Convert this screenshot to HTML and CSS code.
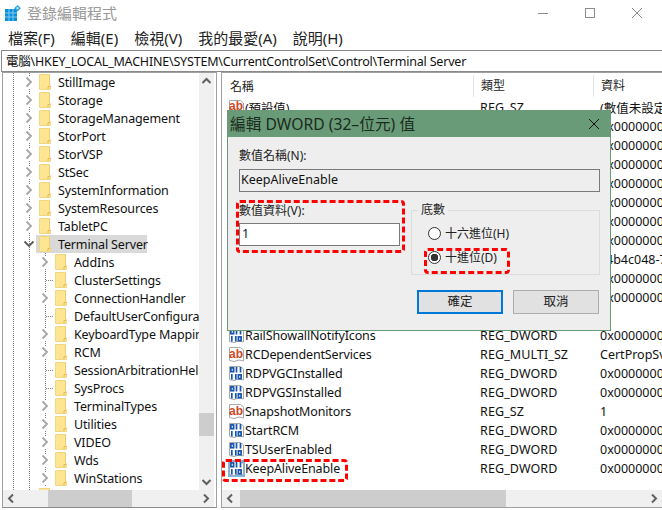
FILE: index.html
```html
<!DOCTYPE html>
<html lang="zh-Hant">
<head>
<meta charset="utf-8">
<title>登錄編輯程式</title>
<link rel="stylesheet" href="styles.css">
</head>
<body>
<svg class="defs" width="0" height="0" aria-hidden="true">
  <symbol id="folder" viewBox="0 0 12 16">
    <path d="M0.5 0.5H10.5V11.5H11.5V15.5H0.5Z" fill="#fee591" stroke="#f3d681"/>
    <path d="M9 15V12.5H11" fill="none" stroke="#e3b84f"/>
    <path d="M10.5 0.5V11" stroke="#edcb73" fill="none"/>
  </symbol>
  <symbol id="chev" viewBox="0 0 8 12">
    <path d="M1.5 1.5L6 6L1.5 10.5" fill="none" stroke="#a6a6a6" stroke-width="1.8"/>
  </symbol>
  <symbol id="page" viewBox="0 0 17 17">
    <path d="M1.5 1.5H12.5L15.5 4V15L11 14L6 15.5L1.5 14.5Z" fill="#fff" stroke="#a8a8a8"/>
  </symbol>
  <symbol id="dword" viewBox="0 0 17 17">
    <path d="M1.5 1.5H12.5L15.5 4V15L11 14L6 15.5L1.5 14.5Z" fill="#fff" stroke="#a8a8a8"/>
    <g fill="none" stroke="#1553ad" stroke-width="1.7">
      <rect x="2.9" y="2.9" width="2.7" height="3.8"/>
      <path d="M8.5 2V7.6M12.5 2V7.6"/>
      <path d="M3.8 9V14.6M7.8 9V14.6"/>
      <rect x="10.4" y="9.9" width="2.7" height="3.8"/>
    </g>
  </symbol>
</svg>

<div class="window">
  <header class="titlebar">
    <svg class="app-icon" width="16" height="16" viewBox="0 0 16 16" aria-hidden="true">
      <rect x="0" y="4" width="12" height="12" fill="#0b8fd9"/>
      <path d="M4 4V16M8 4V16M0 8H12M0 12H12" stroke="#7dcaf2" stroke-width="1"/>
      <path d="M12.5 0L16 3.2L12.5 6.4L9.2 3.2Z" fill="#2aa3e0"/>
      <rect x="11.5" y="2.2" width="2" height="2" fill="#d5effb"/>
    </svg>
    <span class="app-title">登錄編輯程式</span>
    <div class="win-controls">
      <svg width="12" height="12" viewBox="0 0 12 12" aria-hidden="true"><path d="M1 6.5H11" stroke="#8c8c8c"/></svg>
      <svg width="12" height="12" viewBox="0 0 12 12" aria-hidden="true"><rect x="1.5" y="1.5" width="9" height="9" fill="none" stroke="#8c8c8c"/></svg>
      <svg width="12" height="12" viewBox="0 0 12 12" aria-hidden="true"><path d="M1 1L11 11M11 1L1 11" stroke="#8c8c8c"/></svg>
    </div>
  </header>
  <nav class="menubar">
    <span>檔案(F)</span><span>編輯(E)</span><span>檢視(V)</span><span>我的最愛(A)</span><span>說明(H)</span>
  </nav>
  <div class="address">電腦\HKEY_LOCAL_MACHINE\SYSTEM\CurrentControlSet\Control\Terminal Server</div>

  <main class="panes">
    <section class="tree-pane">
      <div class="tree">
        <div class="node lvl1"><svg class="chev"><use href="#chev"/></svg><svg class="fold"><use href="#folder"/></svg><span>StillImage</span></div>
        <div class="node lvl1"><svg class="chev"><use href="#chev"/></svg><svg class="fold"><use href="#folder"/></svg><span>Storage</span></div>
        <div class="node lvl1"><svg class="chev"><use href="#chev"/></svg><svg class="fold"><use href="#folder"/></svg><span>StorageManagement</span></div>
        <div class="node lvl1"><svg class="chev"><use href="#chev"/></svg><svg class="fold"><use href="#folder"/></svg><span>StorPort</span></div>
        <div class="node lvl1"><svg class="chev"><use href="#chev"/></svg><svg class="fold"><use href="#folder"/></svg><span>StorVSP</span></div>
        <div class="node lvl1"><svg class="chev"><use href="#chev"/></svg><svg class="fold"><use href="#folder"/></svg><span>StSec</span></div>
        <div class="node lvl1"><svg class="chev"><use href="#chev"/></svg><svg class="fold"><use href="#folder"/></svg><span>SystemInformation</span></div>
        <div class="node lvl1"><svg class="chev"><use href="#chev"/></svg><svg class="fold"><use href="#folder"/></svg><span>SystemResources</span></div>
        <div class="node lvl1"><svg class="chev"><use href="#chev"/></svg><svg class="fold"><use href="#folder"/></svg><span>TabletPC</span></div>
        <div class="node lvl1 selected"><svg class="chev down" viewBox="0 0 12 8"><path d="M1.5 1.5L6 6L10.5 1.5" fill="none" stroke="#595959" stroke-width="1.8"/></svg><svg class="fold"><use href="#folder"/></svg><span>Terminal Server</span></div>
        <div class="node lvl2"><svg class="chev"><use href="#chev"/></svg><svg class="fold"><use href="#folder"/></svg><span>AddIns</span></div>
        <div class="node lvl2 leaf"><i class="chev-gap"></i><svg class="fold"><use href="#folder"/></svg><span>ClusterSettings</span></div>
        <div class="node lvl2"><svg class="chev"><use href="#chev"/></svg><svg class="fold"><use href="#folder"/></svg><span>ConnectionHandler</span></div>
        <div class="node lvl2 leaf"><i class="chev-gap"></i><svg class="fold"><use href="#folder"/></svg><span>DefaultUserConfiguration</span></div>
        <div class="node lvl2"><svg class="chev"><use href="#chev"/></svg><svg class="fold"><use href="#folder"/></svg><span>KeyboardType Mapping</span></div>
        <div class="node lvl2"><svg class="chev"><use href="#chev"/></svg><svg class="fold"><use href="#folder"/></svg><span>RCM</span></div>
        <div class="node lvl2 leaf"><i class="chev-gap"></i><svg class="fold"><use href="#folder"/></svg><span>SessionArbitrationHelper</span></div>
        <div class="node lvl2 leaf"><i class="chev-gap"></i><svg class="fold"><use href="#folder"/></svg><span>SysProcs</span></div>
        <div class="node lvl2"><svg class="chev"><use href="#chev"/></svg><svg class="fold"><use href="#folder"/></svg><span>TerminalTypes</span></div>
        <div class="node lvl2"><svg class="chev"><use href="#chev"/></svg><svg class="fold"><use href="#folder"/></svg><span>Utilities</span></div>
        <div class="node lvl2"><svg class="chev"><use href="#chev"/></svg><svg class="fold"><use href="#folder"/></svg><span>VIDEO</span></div>
        <div class="node lvl2"><svg class="chev"><use href="#chev"/></svg><svg class="fold"><use href="#folder"/></svg><span>Wds</span></div>
        <div class="node lvl2"><svg class="chev"><use href="#chev"/></svg><svg class="fold"><use href="#folder"/></svg><span>WinStations</span></div>
        <div class="node lvl1"><i class="chev-gap"></i><svg class="fold"><use href="#folder"/></svg></div>
      </div>
      <div class="vscroll">
        <svg class="sb-arrow" viewBox="0 0 15 16"><path d="M3.5 10L7.5 6L11.5 10" fill="none" stroke="#606060" stroke-width="2"/></svg>
        <div class="vtrack"><div class="vthumb"></div></div>
        <svg class="sb-arrow" viewBox="0 0 15 16"><path d="M3.5 6L7.5 10L11.5 6" fill="none" stroke="#606060" stroke-width="2"/></svg>
      </div>
      <div class="hscroll">
        <svg class="sb-arrow" viewBox="0 0 16 16"><path d="M10 3.5L6 7.5L10 11.5" fill="none" stroke="#606060" stroke-width="2"/></svg>
        <div class="htrack tree-track"><div class="hthumb"></div></div>
        <svg class="sb-arrow" viewBox="0 0 16 16"><path d="M6 3.5L10 7.5L6 11.5" fill="none" stroke="#606060" stroke-width="2"/></svg>
      </div>
    </section>

    <section class="list-pane">
      <div class="list-head"><span class="c-name">名稱</span><span class="c-type">類型</span><span class="c-data">資料</span></div>
      <div class="list">
        <div class="row"><span class="c-name"><svg class="val"><use href="#page"/></svg><b class="ab">ab</b>(預設值)</span><span class="c-type">REG_SZ</span><span class="c-data">(數值未設定)</span></div>
        <div class="row"><span class="c-name"><svg class="val"><use href="#dword"/></svg>AllowRemoteRPC</span><span class="c-type">REG_DWORD</span><span class="c-data">0x00000000 (0)</span></div>
        <div class="row"><span class="c-name"><svg class="val"><use href="#dword"/></svg>DelayConMgrTimeout</span><span class="c-type">REG_DWORD</span><span class="c-data">0x00000000 (0)</span></div>
        <div class="row"><span class="c-name"><svg class="val"><use href="#dword"/></svg>DeleteTempDirsOnExit</span><span class="c-type">REG_DWORD</span><span class="c-data">0x00000001 (1)</span></div>
        <div class="row"><span class="c-name"><svg class="val"><use href="#dword"/></svg>fDenyTSConnections</span><span class="c-type">REG_DWORD</span><span class="c-data">0x00000000 (0)</span></div>
        <div class="row"><span class="c-name"><svg class="val"><use href="#dword"/></svg>fSingleSessionPerUser</span><span class="c-type">REG_DWORD</span><span class="c-data">0x00000001 (1)</span></div>
        <div class="row"><span class="c-name"><svg class="val"><use href="#dword"/></svg>GlassSessionId</span><span class="c-type">REG_DWORD</span><span class="c-data">0x00000001 (1)</span></div>
        <div class="row"><span class="c-name"><svg class="val"><use href="#dword"/></svg>InstanceID</span><span class="c-type">REG_DWORD</span><span class="c-data">0x00000000 (0)</span></div>
        <div class="row"><span class="c-name"><svg class="val"><use href="#dword"/></svg>MachineID</span><span class="c-type">REG_SZ</span><span class="c-data">c4b4c048-7f1a</span></div>
        <div class="row"><span class="c-name"><svg class="val"><use href="#dword"/></svg>NotificationTimeOut</span><span class="c-type">REG_DWORD</span><span class="c-data">0x00000000 (0)</span></div>
        <div class="row"><span class="c-name"><svg class="val"><use href="#dword"/></svg>PerSessionTempDir</span><span class="c-type">REG_DWORD</span><span class="c-data">0x00000000 (0)</span></div>
        <div class="row"><span class="c-name"><svg class="val"><use href="#dword"/></svg>ProductVersion</span><span class="c-type">REG_SZ</span><span class="c-data">1</span></div>
        <div class="row"><span class="c-name"><svg class="val"><use href="#dword"/></svg>RailShowallNotifyIcons</span><span class="c-type">REG_DWORD</span><span class="c-data">0x00000001 (1)</span></div>
        <div class="row"><span class="c-name"><svg class="val"><use href="#page"/></svg><b class="ab">ab</b>RCDependentServices</span><span class="c-type">REG_MULTI_SZ</span><span class="c-data">CertPropSvc</span></div>
        <div class="row"><span class="c-name"><svg class="val"><use href="#dword"/></svg>RDPVGCInstalled</span><span class="c-type">REG_DWORD</span><span class="c-data">0x00000001 (1)</span></div>
        <div class="row"><span class="c-name"><svg class="val"><use href="#dword"/></svg>RDPVGSInstalled</span><span class="c-type">REG_DWORD</span><span class="c-data">0x00000001 (1)</span></div>
        <div class="row"><span class="c-name"><svg class="val"><use href="#page"/></svg><b class="ab">ab</b>SnapshotMonitors</span><span class="c-type">REG_SZ</span><span class="c-data">1</span></div>
        <div class="row"><span class="c-name"><svg class="val"><use href="#dword"/></svg>StartRCM</span><span class="c-type">REG_DWORD</span><span class="c-data">0x00000000 (0)</span></div>
        <div class="row"><span class="c-name"><svg class="val"><use href="#dword"/></svg>TSUserEnabled</span><span class="c-type">REG_DWORD</span><span class="c-data">0x00000000 (0)</span></div>
        <div class="row"><span class="c-name"><svg class="val sel"><use href="#dword"/></svg>KeepAliveEnable</span><span class="c-type">REG_DWORD</span><span class="c-data">0x00000001 (1)</span></div>
      </div>
      <div class="hscroll">
        <svg class="sb-arrow" viewBox="0 0 16 16"><path d="M10 3.5L6 7.5L10 11.5" fill="none" stroke="#606060" stroke-width="2"/></svg>
        <div class="htrack list-track"><div class="hthumb"></div></div>
        <svg class="sb-arrow" viewBox="0 0 16 16"><path d="M6 3.5L10 7.5L6 11.5" fill="none" stroke="#606060" stroke-width="2"/></svg>
      </div>
    </section>
  </main>

  <div class="dialog">
    <div class="dlg-title"><span>編輯 DWORD (32–位元) 值</span>
      <svg width="12" height="12" viewBox="0 0 12 12" aria-hidden="true"><path d="M1 1L11 11M11 1L1 11" stroke="#111" stroke-width="1"/></svg>
    </div>
    <div class="dlg-body">
      <label class="lbl">數值名稱(N):</label>
      <div class="field readonly">KeepAliveEnable</div>
      <div class="dlg-cols">
        <div class="col-value">
          <label class="lbl">數值資料(V):</label>
          <div class="field value">1</div>
        </div>
        <fieldset class="base">
          <legend>底數</legend>
          <div class="radio"><i class="dot"></i>十六進位(H)</div>
          <div class="radio"><i class="dot on"></i>十進位(D)</div>
        </fieldset>
      </div>
      <div class="buttons">
        <div class="btn primary">確定</div>
        <div class="btn">取消</div>
      </div>
    </div>
  </div>

  <div class="mark mark-value"></div>
  <div class="mark mark-radio"></div>
  <div class="mark mark-row"></div>
</div>
</body>
</html>
```

FILE: styles.css
```css
* { box-sizing: border-box; }
html, body { margin: 0; padding: 0; }
body {
  width: 662px;
  height: 510px;
  overflow: hidden;
  background: #fff;
  color: #111;
  font-family: "Noto Sans", "Noto Sans CJK TC", sans-serif;
  font-size: 12.5px;
}
.defs { position: absolute; }
.window {
  position: relative;
  width: 662px;
  height: 510px;
  display: flex;
  flex-direction: column;
  overflow: hidden;
}

/* title + menu */
.titlebar { height: 26px; display: flex; align-items: center; padding: 0 0 1px 5px; flex: none; }
.app-icon { flex: none; }
.app-title { margin-left: 6px; font-size: 15px; color: #999; }
.win-controls { margin-left: auto; display: flex; gap: 35px; padding-right: 19px; }
.menubar { height: 24px; display: flex; align-items: center; gap: 16px; padding: 0 0 1px 8px; flex: none; font-size: 15px; color: #222; }
.address {
  height: 22px;
  flex: none;
  margin-left: 1px;
  border: 1px solid #8a8a8a;
  border-right: 0;
  padding-left: 4px;
  line-height: 21px;
  letter-spacing: -0.2px;
  white-space: nowrap;
}

/* panes */
.panes { flex: 1; display: flex; min-height: 0; padding: 0 0 2px 2px; }
.tree-pane {
  width: 215px;
  flex: none;
  display: grid;
  grid-template-columns: 196px 15px 1fr;
  grid-template-rows: 1fr 17px;
  border: 1px solid #a0a0a0;
  border-bottom-color: #8a8a8a;
  overflow: hidden;
}
.list-pane {
  margin-left: 4px;
  flex: 1;
  display: flex;
  flex-direction: column;
  min-width: 0;
  border: 1px solid #a0a0a0;
  border-right: 0;
  overflow: hidden;
}

/* tree */
.tree {
  overflow: hidden;
  letter-spacing: -0.15px;
  background-image:
    repeating-linear-gradient(to bottom, #808080 0 1px, transparent 1px 2px),
    repeating-linear-gradient(to bottom, #808080 0 1px, transparent 1px 2px);
  background-size: 1px 100%, 1px 100%;
  background-position: 10px 0, 26px 0;
  background-repeat: no-repeat;
}
.node { height: 18px; flex: none; display: flex; align-items: center; white-space: nowrap; position: relative; }
.node.lvl1 { padding-left: 21px; }
.node.lvl2 {
  padding-left: 37px;
  background-image: repeating-linear-gradient(to bottom, #808080 0 1px, transparent 1px 2px);
  background-size: 1px 100%;
  background-position: 42px 0;
  background-repeat: no-repeat;
}
.node.leaf {
  background-image:
    repeating-linear-gradient(to bottom, #808080 0 1px, transparent 1px 2px),
    repeating-linear-gradient(to right, #808080 0 1px, transparent 1px 2px);
  background-size: 1px 100%, 8px 1px;
  background-position: 42px 0, 43px 9px;
}
.chev { width: 8px; height: 12px; flex: none; margin: 0 6px 0 1px; background: #fff; }
.chev.down { width: 12px; height: 8px; margin: 0 4px 0 -1px; background: none; position: relative; }
.chev-gap { width: 8px; margin: 0 6px 0 1px; flex: none; }
.fold { width: 12px; height: 16px; flex: none; margin-right: 7px; }
.selected::before {
  content: "";
  position: absolute;
  left: 33px;
  width: 111px;
  top: 0;
  bottom: 0;
  background: #d9d9d9;
}
.selected > * { position: relative; }

/* scrollbars */
.vscroll { display: flex; flex-direction: column; background: #f0f0f0; }
.sb-arrow { width: 15px; height: 16px; flex: none; }
.vtrack { flex: 1; display: flex; flex-direction: column; justify-content: flex-end; padding-bottom: 38px; }
.vthumb { height: 23px; background: #cdcdcd; }
.hscroll {
  grid-column: 1 / 3;
  height: 17px;
  flex: none;
  display: flex;
  align-items: center;
  background: #f0f0f0;
}
.hscroll .sb-arrow { width: 16px; }
.htrack { flex: 1; height: 100%; display: flex; }
.hthumb { height: 100%; background: #cdcdcd; }
.tree-track { padding-left: 29px; }
.tree-track .hthumb { width: 84px; }
.list-track { padding-left: 2px; }
.list-track .hthumb { width: 266px; }

/* list */
.list-head { height: 25px; flex: none; display: flex; align-items: center; font-size: 12px; color: #222; }
.list-head .c-type, .list-head .c-data { border-left: 1px solid #e5e5e5; height: 22px; line-height: 22px; padding-left: 7px; }
.list { flex: 1; overflow: hidden; }
.row { height: 19px; display: flex; align-items: center; white-space: nowrap; }
.c-name { width: 251px; flex: none; padding-left: 6px; display: flex; align-items: center; position: relative; letter-spacing: -0.13px; }
.list-head .c-name { padding-left: 8px; }
.c-type { width: 120px; flex: none; padding-left: 7px; letter-spacing: 0.1px; }
.c-data { flex: 1; padding-left: 7px; overflow: hidden; }
.val { width: 17px; height: 17px; flex: none; }
.val.sel { background: #7db3e6; }
.ab {
  position: absolute;
  left: 7px;
  top: 1px;
  font-family: "Liberation Sans", sans-serif;
  font-size: 12px;
  line-height: 14px;
  font-weight: 700;
  letter-spacing: 0;
  color: #d1481f;
}

/* dialog */
.dialog {
  position: absolute;
  left: 227px;
  top: 110px;
  width: 384px;
  height: 221px;
  background: #eeeeee;
  border: 1px solid #6a9b78;
  border-top: 0;
  display: flex;
  flex-direction: column;
}
.dlg-title {
  height: 27px;
  flex: none;
  background: #6a9b78;
  margin: 0 -1px;
  padding: 0 11px 0 3px;
  display: flex;
  align-items: center;
  justify-content: space-between;
  font-size: 15.7px;
  color: #1c2b20;
}
.dlg-body { flex: 1; padding: 10px 10px 0 11px; display: flex; flex-direction: column; }
.lbl { display: block; height: 18px; line-height: 18px; font-size: 12px; color: #222; }
.field { border: 1px solid #7a7a7a; height: 23px; line-height: 20px; padding-left: 1px; margin-top: 4px; }
.readonly { width: 361px; background: #eeeeee; }
.dlg-cols { display: flex; margin-top: 10px; }
.col-value { width: 161px; flex: none; }
.value { background: #fff; margin-top: 3px; padding-left: 2px; color: #123; }
.base {
  margin: 1px 0 0 11px;
  padding: 4px 0 0;
  width: 190px;
  height: 72px;
  border: 1px solid #dcdcdc;
  min-width: 0;
}
.base legend { padding: 0 3px; margin-left: 6px; font-size: 12px; line-height: 14px; color: #222; }
.radio { height: 24px; padding-left: 16px; display: flex; align-items: center; gap: 4px; font-size: 12px; color: #222; }
.dot { width: 13px; height: 13px; border-radius: 50%; border: 1px solid #333; background: #fff; flex: none; }
.dot.on { background: radial-gradient(circle, #333 0 3.5px, #fff 4px); }
.buttons { display: flex; gap: 10px; margin-top: 15px; margin-left: 178px; }
.btn {
  width: 86px;
  height: 24px;
  background: #e1e1e1;
  border: 1px solid #adadad;
  text-align: center;
  line-height: 22px;
  font-size: 12.5px;
  color: #222;
}
.btn.primary { border: 2px solid #0078d7; line-height: 20px; }

/* red annotation marks */
.mark { position: absolute; border: 3px dashed #f00; border-radius: 4px; }
.mark-value { left: 236px; top: 200px; width: 169px; height: 53px; }
.mark-radio { left: 424px; top: 248px; width: 86px; height: 26px; }
.mark-row { left: 222px; top: 459px; width: 126px; height: 23px; }
```
